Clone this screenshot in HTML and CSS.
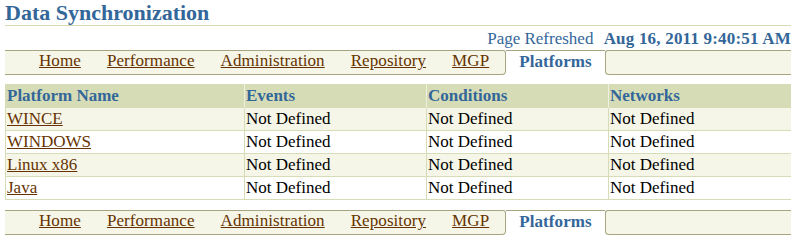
FILE: index.html
```html
<!DOCTYPE html>
<html>
<head>
<meta charset="utf-8">
<link rel="stylesheet" href="styles.css">
</head>
<body>
<h1 class="title">Data Synchronization</h1>
<div class="refresh">Page Refreshed <b class="refresh-date">Aug 16, 2011 9:40:51 AM</b></div>
<div class="tabbar">
  <div class="tabs-left">
    <a class="tab" href="#">Home</a>
    <a class="tab" href="#">Performance</a>
    <a class="tab" href="#">Administration</a>
    <a class="tab" href="#">Repository</a>
    <a class="tab" href="#">MGP</a>
  </div>
  <div class="tab-selected">Platforms</div>
  <div class="tabs-right"></div>
</div>
<table class="grid">
  <colgroup>
    <col class="c1"><col class="c2"><col class="c3"><col class="c4">
  </colgroup>
  <thead>
    <tr><th>Platform Name</th><th>Events</th><th>Conditions</th><th>Networks</th></tr>
  </thead>
  <tbody>
    <tr class="odd"><td><a href="#">WINCE</a></td><td>Not Defined</td><td>Not Defined</td><td>Not Defined</td></tr>
    <tr><td><a href="#">WINDOWS</a></td><td>Not Defined</td><td>Not Defined</td><td>Not Defined</td></tr>
    <tr class="odd"><td><a href="#">Linux x86</a></td><td>Not Defined</td><td>Not Defined</td><td>Not Defined</td></tr>
    <tr><td><a href="#">Java</a></td><td>Not Defined</td><td>Not Defined</td><td>Not Defined</td></tr>
  </tbody>
</table>
<div class="tabbar tabbar-bottom">
  <div class="tabs-left">
    <a class="tab" href="#">Home</a>
    <a class="tab" href="#">Performance</a>
    <a class="tab" href="#">Administration</a>
    <a class="tab" href="#">Repository</a>
    <a class="tab" href="#">MGP</a>
  </div>
  <div class="tab-selected">Platforms</div>
  <div class="tabs-right"></div>
</div>
</body>
</html>
```
FILE: styles.css
```css
html, body {
  background: #ffffff;
}
body {
  margin: 0 5px;
  font-family: "Liberation Serif", "Times New Roman", serif;
  font-size: 17px;
  color: #000000;
}
a {
  color: #663300;
  text-decoration: underline;
}
.title {
  margin: 0;
  font-size: 22px;
  line-height: 25px;
  font-weight: bold;
  color: #336699;
  border-bottom: 1px solid #d6dbb4;
}
.refresh {
  margin-top: 3px;
  line-height: 20px;
  text-align: right;
  color: #336699;
}
.refresh-date {
  margin-left: 6px;
  letter-spacing: 0.2px;
}
.tabbar {
  display: flex;
  height: 25px;
  margin-top: 1px;
}
.tabs-left, .tabs-right {
  background: #f6f6e8;
  border-top: 1px solid #a5a582;
  border-bottom: 1px solid #a5a582;
}
.tabs-left {
  display: flex;
  padding-left: 21px;
  padding-right: 3px;
  border-right: 1px solid #a5a582;
  border-top-right-radius: 3px;
  border-bottom-right-radius: 4px;
}
.tabs-right {
  flex: 1;
  border-left: 1px solid #a5a582;
  border-top-left-radius: 3px;
  border-bottom-left-radius: 4px;
}
.tab {
  padding: 0 13px 3px;
  line-height: 20px;
  letter-spacing: 0.08px;
}
.tab-selected {
  padding: 1px 13px 2px;
  line-height: 20px;
  font-weight: bold;
  letter-spacing: 0.1px;
  color: #336699;
  border-top: 1px solid #a5a582;
  background: #ffffff;
}
.grid {
  margin-top: 9px;
  width: 786px;
  table-layout: fixed;
  border-collapse: collapse;
  border: 1px solid #d6ddb6;
}
.c1 { width: 239px; }
.c2 { width: 182px; }
.c3 { width: 182px; }
.c4 { width: 183px; }
.grid th, .grid td {
  padding: 0 1px;
  line-height: 22px;
  text-align: left;
  white-space: nowrap;
}
.grid th {
  background: #d6ddb6;
  color: #336699;
  font-weight: bold;
  border-left: 1px solid #eef1df;
}
.grid th:first-child {
  border-left: 1px solid #d6ddb6;
}
.grid td {
  border: 1px solid #d6ddb6;
}
.grid tr.odd td {
  background: #f5f6e8;
}
.tabbar-bottom {
  margin-top: 10px;
}
```
